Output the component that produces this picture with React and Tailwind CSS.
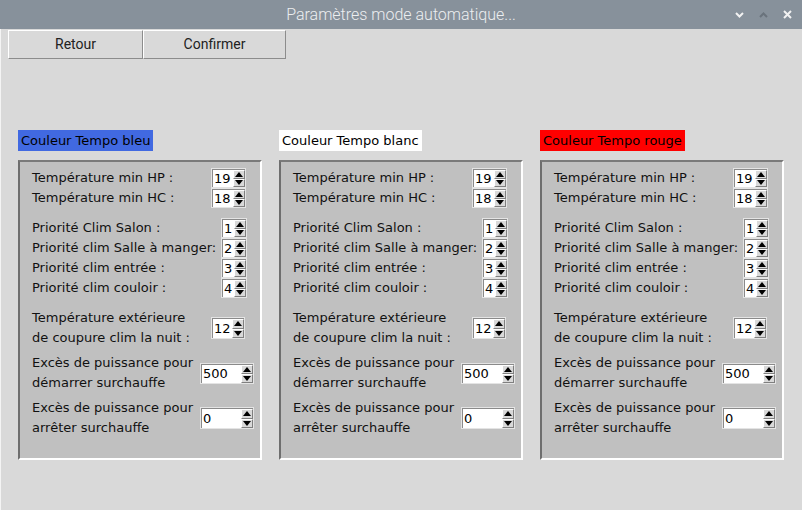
import React from "react"

function Arrow({ up }) {
  return (
    <div className="flex flex-1 items-center justify-center bg-[#d9d9d9] border-t border-l border-t-white border-l-white border-b border-r border-b-[#7f7f7f] border-r-[#7f7f7f]">
      <svg width="8" height="5" viewBox="0 0 8 5">
        {up ? <polygon points="0,5 8,5 4,0" fill="#000" /> : <polygon points="0,0 8,0 4,5" fill="#000" />}
      </svg>
    </div>
  )
}

function Spin({ value, box }) {
  return (
    <div className={`flex border border-[#e4e4e4] bg-white ${box}`}>
      <div className="flex-1 flex items-center pl-[1px] text-[13px] leading-none text-black border-t border-l border-[#8a8a8a]">
        {value}
      </div>
      <div className="flex flex-col w-[12px] border-t border-[#8a8a8a]">
        <Arrow up />
        <Arrow />
      </div>
    </div>
  )
}

function Row({ label, labelW, children, two }) {
  return (
    <div className={`flex items-center ${two ? "h-[40px]" : "h-[20px]"}`}>
      <div className={`${labelW} leading-[20px] whitespace-pre-line text-[13px] text-[#111]`}>{label}</div>
      {children}
    </div>
  )
}

function Panel({ title, titleBg }) {
  return (
    <div className="w-[244px]">
      <div className={`w-fit h-[21px] leading-[21px] px-[3px] text-[13px] text-black ${titleBg}`}>{title}</div>
      <div className="mt-[9px] h-[300px] bg-[#c0c0c0] border-2 border-t-[#7a7a7a] border-l-[#6e6e6e] border-r-white border-b-white pl-[12px] pt-[6px]">
        <Row label="Température min HP :" labelW="w-[179px]">
          <Spin value="19" box="w-[35px] h-[20px]" />
        </Row>
        <Row label="Température min HC :" labelW="w-[179px]">
          <Spin value="18" box="w-[35px] h-[20px]" />
        </Row>
        <div className="mt-[10px]">
          <Row label="Priorité Clim Salon :" labelW="w-[189px]">
            <Spin value="1" box="w-[26px] h-[20px]" />
          </Row>
          <Row label="Priorité clim Salle à manger:" labelW="w-[189px]">
            <Spin value="2" box="w-[26px] h-[20px]" />
          </Row>
          <Row label="Priorité clim entrée :" labelW="w-[189px]">
            <Spin value="3" box="w-[26px] h-[20px]" />
          </Row>
          <Row label="Priorité clim couloir :" labelW="w-[189px]">
            <Spin value="4" box="w-[26px] h-[20px]" />
          </Row>
        </div>
        <div className="mt-[10px]">
          <Row two label={"Température extérieure\nde coupure clim la nuit :"} labelW="w-[179px]">
            <Spin value="12" box="w-[34px] h-[22px]" />
          </Row>
        </div>
        <div className="mt-[5px]">
          <Row two label={"Excès de puissance pour\ndémarrer surchauffe"} labelW="w-[168px]">
            <Spin value="500" box="w-[54px] h-[21px]" />
          </Row>
        </div>
        <div className="mt-[5px]">
          <Row two label={"Excès de puissance pour\narrêter surchauffe"} labelW="w-[168px]">
            <Spin value="0" box="w-[54px] h-[22px]" />
          </Row>
        </div>
      </div>
    </div>
  )
}

export default function App() {
  return (
    <div className="w-[802px] h-[510px] overflow-hidden font-['DejaVu_Sans',sans-serif]">
      {/* Title bar */}
      <div className="relative h-[29px] bg-[#87919b] flex items-center justify-center">
        <span className="font-['Roboto',sans-serif] font-light text-[16px] text-[#eceef0]">Paramètres mode automatique...</span>
        <div className="absolute right-[10px] top-0 h-full flex items-center gap-[15px]">
          <svg width="9" height="6" viewBox="0 0 9 6">
            <polyline points="1,1 4.5,4.5 8,1" fill="none" stroke="#f2f2f2" strokeWidth="2" />
          </svg>
          <svg width="9" height="6" viewBox="0 0 9 6">
            <polyline points="1,5 4.5,1.5 8,5" fill="none" stroke="#6a737c" strokeWidth="2" />
          </svg>
          <svg width="9" height="9" viewBox="0 0 9 9">
            <path d="M1 1 L8 8 M8 1 L1 8" stroke="#f2f2f2" strokeWidth="2" />
          </svg>
        </div>
      </div>

      {/* Body */}
      <div className="h-[481px] bg-[#d9d9d9] border-l border-[#f4f4f4]">
        <div className="flex pl-[7px] pt-[1px]">
          <button className="w-[135px] h-[29px] bg-[#d9d9d9] border border-t-white border-l-white border-b-[#8c8c8c] border-r-[#8c8c8c] font-['Roboto',sans-serif] text-[14px] text-[#222]">
            Retour
          </button>
          <button className="w-[143px] h-[29px] bg-[#d9d9d9] border border-t-white border-l-white border-b-[#8c8c8c] border-r-[#8c8c8c] font-['Roboto',sans-serif] text-[14px] text-[#222]">
            Confirmer
          </button>
        </div>

        <div className="flex gap-[17px] pl-[17px] mt-[71px]">
          <Panel title="Couleur Tempo bleu" titleBg="bg-[#4169e1]" />
          <Panel title="Couleur Tempo blanc" titleBg="bg-white" />
          <Panel title="Couleur Tempo rouge" titleBg="bg-[#ff0000]" />
        </div>
      </div>
    </div>
  )
}
